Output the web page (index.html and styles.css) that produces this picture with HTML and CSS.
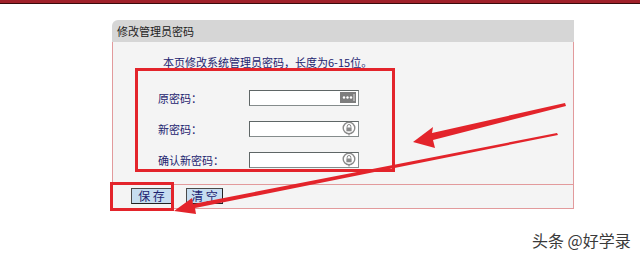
FILE: index.html
```html
<!DOCTYPE html>
<html lang="zh-CN">
<head>
    <meta charset="UTF-8">
    <meta name="viewport" content="width=device-width, initial-scale=1.0">
    <title>修改管理员密码</title>
    <link rel="stylesheet" href="styles.css">
</head>
<body>
    <div class="topbar"></div>

    <div class="panel">
        <div class="panel-head">修改管理员密码</div>
        <div class="panel-body">
            <p class="intro">本页修改系统管理员密码，长度为6-15位。</p>
            <div class="row">
                <span class="label">原密码：</span>
                <div class="field">
                    <svg class="icon" width="16" height="11" viewBox="0 0 16 11">
                        <rect x="0" y="0" width="16" height="11" fill="#7d7d7d"/>
                        <circle cx="4" cy="5.5" r="1.2" fill="#fff"/>
                        <circle cx="7.5" cy="5.5" r="1.2" fill="#fff"/>
                        <circle cx="11" cy="5.5" r="1.2" fill="#fff"/>
                        <rect x="13.5" y="2" width="1" height="7" fill="#ddd"/>
                    </svg>
                </div>
            </div>
            <div class="row">
                <span class="label">新密码：</span>
                <div class="field">
                    <svg class="icon" width="14" height="15" viewBox="0 0 14 15">
                        <circle cx="7" cy="7" r="5.8" fill="none" stroke="#8a8a8a" stroke-width="1.4"/>
                        <path d="M5.2 6.6 V5.3 a1.8 1.8 0 0 1 3.6 0 V6.6" fill="none" stroke="#8a8a8a" stroke-width="1"/>
                        <rect x="4.4" y="6.5" width="5.2" height="3.8" fill="#8a8a8a"/>
                        <path d="M7 12.8 V14.6" stroke="#8a8a8a" stroke-width="1.2"/>
                    </svg>
                </div>
            </div>
            <div class="row">
                <span class="label">确认新密码：</span>
                <div class="field">
                    <svg class="icon" width="14" height="15" viewBox="0 0 14 15">
                        <circle cx="7" cy="7" r="5.8" fill="none" stroke="#8a8a8a" stroke-width="1.4"/>
                        <path d="M5.2 6.6 V5.3 a1.8 1.8 0 0 1 3.6 0 V6.6" fill="none" stroke="#8a8a8a" stroke-width="1"/>
                        <rect x="4.4" y="6.5" width="5.2" height="3.8" fill="#8a8a8a"/>
                        <path d="M7 12.8 V14.6" stroke="#8a8a8a" stroke-width="1.2"/>
                    </svg>
                </div>
            </div>
        </div>
        <div class="panel-foot">
            <button class="btn btn-save">保 存</button>
            <button class="btn">清 空</button>
        </div>
    </div>

    <!-- red marks drawn over the screenshot -->
    <div class="mark mark-form"></div>
    <div class="mark mark-save"></div>
    <svg class="arrows" width="640" height="257" viewBox="0 0 640 257">
        <polygon points="565,103 432,133 433,127 413,142 435,148 433,140 566,106" fill="#e3242b"/>
        <polygon points="557,133 193,204 192,198 174,211 196,214 195,208 558,135" fill="#e3242b"/>
    </svg>

    <div class="watermark">头条 @好学录</div>
</body>
</html>
```

FILE: styles.css
```css
body {
    margin: 0;
    padding: 0;
    background: #fff;
    font-family: "Noto Sans CJK SC", "DejaVu Sans", sans-serif;
    font-size: 11px;
    width: 640px;
    height: 257px;
    position: relative;
    overflow: hidden;
}
.topbar {
    height: 3px;
    background: #a0212a;
    border-bottom: 1px solid #3a0a0c;
}
.panel {
    width: 462px;
    margin: 16px 0 0 112px;
}
.panel-head {
    height: 22px;
    line-height: 22px;
    padding-left: 5px;
    background: #d6d6d6;
    border-radius: 6px 0 0 0;
    color: #222;
    font-size: 11px;
}
.panel-body {
    height: 142px;
    box-sizing: border-box;
    background: #f4f4f4;
    border-left: 1px solid #e29a9c;
    border-right: 1px solid #e29a9c;
    padding-top: 13px;
}
.intro {
    margin: 0 0 13px 0;
    padding-left: 50px;
    line-height: 14px;
    color: #1d2470;
}
.row {
    display: flex;
    align-items: center;
    height: 31px;
    padding-left: 45px;
}
.label {
    width: 91px;
    color: #1d2470;
}
.field {
    width: 110px;
    height: 16px;
    box-sizing: border-box;
    background: #fff;
    border: 1px solid #858c8c;
    border-top-color: #5f6666;
    border-left-color: #5f6666;
    display: flex;
    align-items: center;
    justify-content: flex-end;
    padding-right: 2px;
}
.icon {
    display: block;
}
.panel-foot {
    height: 25px;
    box-sizing: border-box;
    background: #f4f4f4;
    border: 1px solid #e29a9c;
    display: flex;
    align-items: flex-start;
    gap: 14px;
    padding: 3px 0 0 18px;
}
.btn {
    width: 37px;
    height: 16px;
    padding: 0;
    margin: 0;
    font-family: "Noto Sans CJK SC", sans-serif;
    font-size: 12px;
    line-height: 14px;
    color: #1d2470;
    background: #c6ddf0;
    border: 1px solid #4a4a4a;
    border-right-color: #222;
    border-bottom-color: #222;
}
.btn-save {
    width: 41px;
}
.mark {
    position: absolute;
    border: 3px solid #e3242b;
    box-sizing: border-box;
}
.mark-form {
    left: 135px;
    top: 68px;
    width: 260px;
    height: 104px;
}
.mark-save {
    left: 110px;
    top: 182px;
    width: 64px;
    height: 29px;
}
.arrows {
    position: absolute;
    left: 0;
    top: 0;
}
.watermark {
    position: absolute;
    left: 532px;
    top: 229px;
    font-size: 16px;
    color: #3a3a3a;
    line-height: 22px;
}
```
